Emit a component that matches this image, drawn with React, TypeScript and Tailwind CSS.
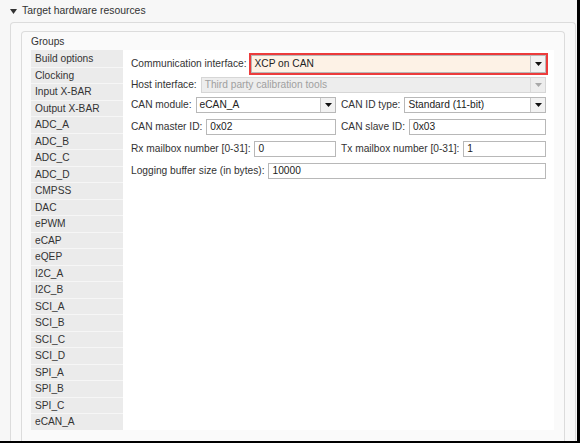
import React from "react";

const groups = [
  "Build options",
  "Clocking",
  "Input X-BAR",
  "Output X-BAR",
  "ADC_A",
  "ADC_B",
  "ADC_C",
  "ADC_D",
  "CMPSS",
  "DAC",
  "ePWM",
  "eCAP",
  "eQEP",
  "I2C_A",
  "I2C_B",
  "SCI_A",
  "SCI_B",
  "SCI_C",
  "SCI_D",
  "SPI_A",
  "SPI_B",
  "SPI_C",
  "eCAN_A",
];

function Arrow({ disabled }: { disabled?: boolean }) {
  return (
    <svg width="7" height="4" viewBox="0 0 7 4">
      <path d="M0 0H7L3.5 4Z" fill={disabled ? "#a8a8a8" : "#111111"} />
    </svg>
  );
}

function Select({
  value,
  disabled,
  highlight,
}: {
  value: string;
  disabled?: boolean;
  highlight?: boolean;
}) {
  const box = disabled
    ? "border-[#d6d6d6] bg-[#ededed] text-[#a0a0a0]"
    : highlight
    ? "border-[#b8b8b8] bg-[#fdf2e6] text-[#222] outline-2 outline-[#ec3c3c]"
    : "border-[#b8b8b8] bg-white text-[#222]";
  const h = highlight ? "h-[18px]" : "h-[16px]";
  return (
    <div className={`flex flex-1 min-w-0 items-stretch border ${box} ${h}`}>
      <div className="flex flex-1 items-center truncate pl-[3px]">{value}</div>
      <div
        className={`flex w-[15px] items-center justify-center border-l ${
          disabled ? "border-[#dadada] bg-[#ededed]" : "border-[#c8c8c8] bg-[#f2f2f2]"
        }`}
      >
        <Arrow disabled={disabled} />
      </div>
    </div>
  );
}

function Input({ value }: { value: string }) {
  return (
    <div className="flex h-[16px] min-w-0 flex-1 items-center border border-[#b8b8b8] bg-white pl-[3px] text-[#222]">
      {value}
    </div>
  );
}

function Field({ label, children }: { label: string; children: React.ReactNode }) {
  return (
    <div className="flex items-center gap-[4px]">
      <span className="whitespace-nowrap">{label}</span>
      {children}
    </div>
  );
}

export default function App() {
  return (
    <div className="flex h-[443px] w-[580px] flex-col overflow-hidden border-b-[2px] border-r-[3px] border-black bg-[#f7f7f7] font-['Liberation_Sans',Arial,sans-serif] text-[10.2px] text-[#333]">
      <div className="flex h-[22px] shrink-0 items-center gap-[5px] pl-[10px] text-[#333]">
        <svg width="7" height="5" viewBox="0 0 7 5">
          <path d="M0 0H7L3.5 5Z" fill="#333" />
        </svg>
        <span className="text-[10.4px]">Target hardware resources</span>
      </div>
      <div className="ml-[10px] mr-[1px] flex-1 rounded-t-[4px] border border-b-0 border-[#dcdcdc] bg-[#f9f9f9] px-[10px] pt-[8px]">
        <div className="h-full rounded-t-[4px] border border-b-0 border-[#dcdcdc] bg-[#fafafa] pl-[9px] pr-[10px] pt-[2px]">
          <div className="h-[16px] leading-[16px] pl-[0px]">Groups</div>
          <div className="flex h-[380px] overflow-hidden">
            <div className="flex w-[92px] shrink-0 flex-col bg-[#ebebeb]">
              {groups.map((g, i) => (
                <div
                  key={g}
                  className={`flex h-[16.5px] shrink-0 items-center pl-[4px] ${
                    i === 0 ? "" : "border-t border-[#f6f6f6]"
                  }`}
                >
                  {g}
                </div>
              ))}
            </div>
            <div className="flex flex-1 flex-col bg-white pl-[8px] pr-[8px] pt-[3px]">
              <div className="flex h-[22px] items-center gap-[4px]">
                <span className="whitespace-nowrap">Communication interface:</span>
                <Select value="XCP on CAN" highlight />
              </div>
              <div className="flex h-[19px] items-center gap-[4px]">
                <span className="whitespace-nowrap">Host interface:</span>
                <Select value="Third party calibration tools" disabled />
              </div>
              <div className="grid h-[22px] grid-cols-2 items-center gap-x-[5px]">
                <Field label="CAN module:">
                  <Select value="eCAN_A" />
                </Field>
                <Field label="CAN ID type:">
                  <Select value="Standard (11-bit)" />
                </Field>
              </div>
              <div className="grid h-[22px] grid-cols-2 items-center gap-x-[5px]">
                <Field label="CAN master ID:">
                  <Input value="0x02" />
                </Field>
                <Field label="CAN slave ID:">
                  <Input value="0x03" />
                </Field>
              </div>
              <div className="grid h-[22px] grid-cols-2 items-center gap-x-[5px]">
                <Field label="Rx mailbox number [0-31]:">
                  <Input value="0" />
                </Field>
                <Field label="Tx mailbox number [0-31]:">
                  <Input value="1" />
                </Field>
              </div>
              <div className="flex h-[22px] items-center gap-[4px]">
                <span className="whitespace-nowrap">Logging buffer size (in bytes):</span>
                <Input value="10000" />
              </div>
            </div>
          </div>
        </div>
      </div>
    </div>
  );
}
